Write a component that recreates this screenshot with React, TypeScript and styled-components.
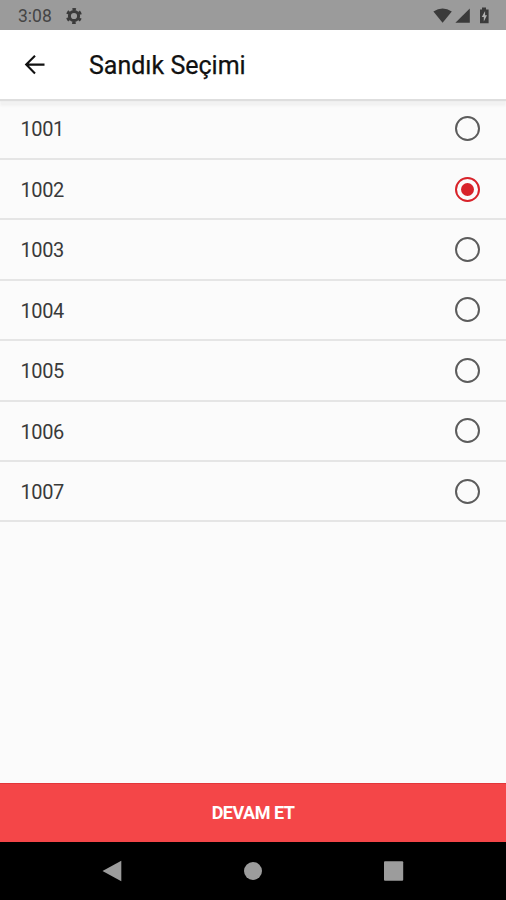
import React, { useState } from "react";
import styled, { createGlobalStyle } from "styled-components";

const GlobalStyle = createGlobalStyle`
  * { box-sizing: border-box; }
  body { margin: 0; background: #fafafa; font-family: Roboto, "Liberation Sans", sans-serif; }
`;

const Screen = styled.div`
  width: 100%;
  height: 100vh;
  display: flex;
  flex-direction: column;
  background: #fbfbfb;
  overflow: hidden;
`;

const StatusBar = styled.div`
  flex: 0 0 30px;
  display: flex;
  align-items: center;
  padding: 1px 15px 0 18px;
  background: #9b9b9b;
  color: #454545;
`;

const Clock = styled.span`
  font-size: 17.5px;
  line-height: 28px;
  width: 47px;
`;

const StatusIcons = styled.div`
  display: flex;
  margin-left: auto;
`;

const Icon = styled.svg`
  display: block;
  flex: none;
`;

const Header = styled.header`
  flex: 0 0 69px;
  display: flex;
  align-items: center;
  padding: 0 21px;
  background: #fff;
  box-shadow: 0 2px 1px #dedede, 0 7px 2px #f2f2f2;
  z-index: 1;
`;

const BackButton = styled.button`
  display: flex;
  width: 68px;
  padding: 0;
  border: 0;
  background: none;
`;

const Title = styled.h1`
  margin: 3px 0 0;
  font-size: 25px;
  line-height: 28px;
  font-weight: 400;
  color: #111;
  -webkit-text-stroke: 0.25px #111;
`;

const List = styled.div`
  flex: 1;
  display: flex;
  flex-direction: column;
  padding-top: 0.4px;
`;

const Row = styled.button`
  display: flex;
  align-items: center;
  justify-content: space-between;
  height: 60.45px;
  padding: 1px 26px 0 20.5px;
  border: 0;
  border-bottom: 2px solid #e5e5e5;
  background: none;
  font-family: inherit;
  font-size: 20px;
  letter-spacing: -0.4px;
  color: #3a3a3a;
`;

const BoxNumber = styled.span`
  padding-top: 0.6px;
`;

const Radio = styled.span<{ $checked: boolean }>`
  display: flex;
  align-items: center;
  justify-content: center;
  width: 25px;
  height: 25px;
  margin-top: -1px;
  border: 2px solid ${(p) => (p.$checked ? "#d8232a" : "#5c5c5c")};
  border-radius: 50%;

  &::after {
    content: "";
    width: 13px;
    height: 13px;
    border-radius: 50%;
    background: ${(p) => (p.$checked ? "#d8232a" : "transparent")};
  }
`;

const ContinueButton = styled.button`
  flex: 0 0 59px;
  padding: 0 0 2px;
  border: 0;
  border-top: 1px solid #e2363a;
  background: #f44648;
  color: #fff;
  font-family: inherit;
  font-size: 18px;
  letter-spacing: -0.5px;
  font-weight: 700;
`;

const NavBar = styled.nav`
  flex: 0 0 58px;
  display: flex;
  align-items: center;
  justify-content: space-between;
  padding: 0 102px;
  background: #000;
`;

const boxes = ["1001", "1002", "1003", "1004", "1005", "1006", "1007"];

export default function App() {
  const [selected, setSelected] = useState("1002");
  return (
    <Screen>
      <GlobalStyle />
      <StatusBar>
        <Clock>3:08</Clock>
        <Icon width="18" height="18" viewBox="0 0 18 18">
          <g fill="none" stroke="#3a3a3a">
            <circle cx="9" cy="9" r="4.6" strokeWidth="3" />
            <circle cx="9" cy="9" r="6.7" strokeWidth="2.6" strokeDasharray="3.4 3.616" strokeDashoffset="1.7" transform="rotate(30 9 9)" />
          </g>
        </Icon>
        <StatusIcons>
          <Icon width="58" height="18" viewBox="0 0 58 18">
            <g fill="#3a3a3a">
              <path d="M0.4 4.6Q9.6-1.8 18.8 4.6L9.6 15.7Z" />
              <path d="M22.4 15.8 36.8 1.6V15.8Z" />
              <path d="M47 2.4H49V.6H53V2.4H55.6V16.2H47Z" />
            </g>
            <path d="M52.1 4 48.8 10H50.8V14.4L54 8.2H52.1Z" fill="#b0b0b0" />
          </Icon>
        </StatusIcons>
      </StatusBar>
      <Header>
        <BackButton aria-label="Geri">
          <Icon width="28" height="28" viewBox="0 0 28 28">
            <path d="M23.5 13.6H5.5M14 4.8 5.2 13.6l8.8 8.8" fill="none" stroke="#111" strokeWidth="2.1" />
          </Icon>
        </BackButton>
        <Title>Sandık Seçimi</Title>
      </Header>
      <List role="radiogroup">
        {boxes.map((box) => (
          <Row key={box} role="radio" aria-checked={selected === box} onClick={() => setSelected(box)}>
            <BoxNumber>{box}</BoxNumber>
            <Radio $checked={selected === box} />
          </Row>
        ))}
      </List>
      <ContinueButton>DEVAM ET</ContinueButton>
      <NavBar>
        <Icon width="20" height="22" viewBox="0 0 20 22">
          <path d="M.5 11 19.3.7V21.3Z" fill="#9c9c9c" />
        </Icon>
        <Icon width="18" height="18" viewBox="0 0 18 18">
          <circle cx="9" cy="9" r="9" fill="#9c9c9c" />
        </Icon>
        <Icon width="20" height="20" viewBox="0 0 20 20">
          <rect x="0" y=".3" width="19.2" height="19.4" rx="1" fill="#9c9c9c" />
        </Icon>
      </NavBar>
    </Screen>
  );
}
